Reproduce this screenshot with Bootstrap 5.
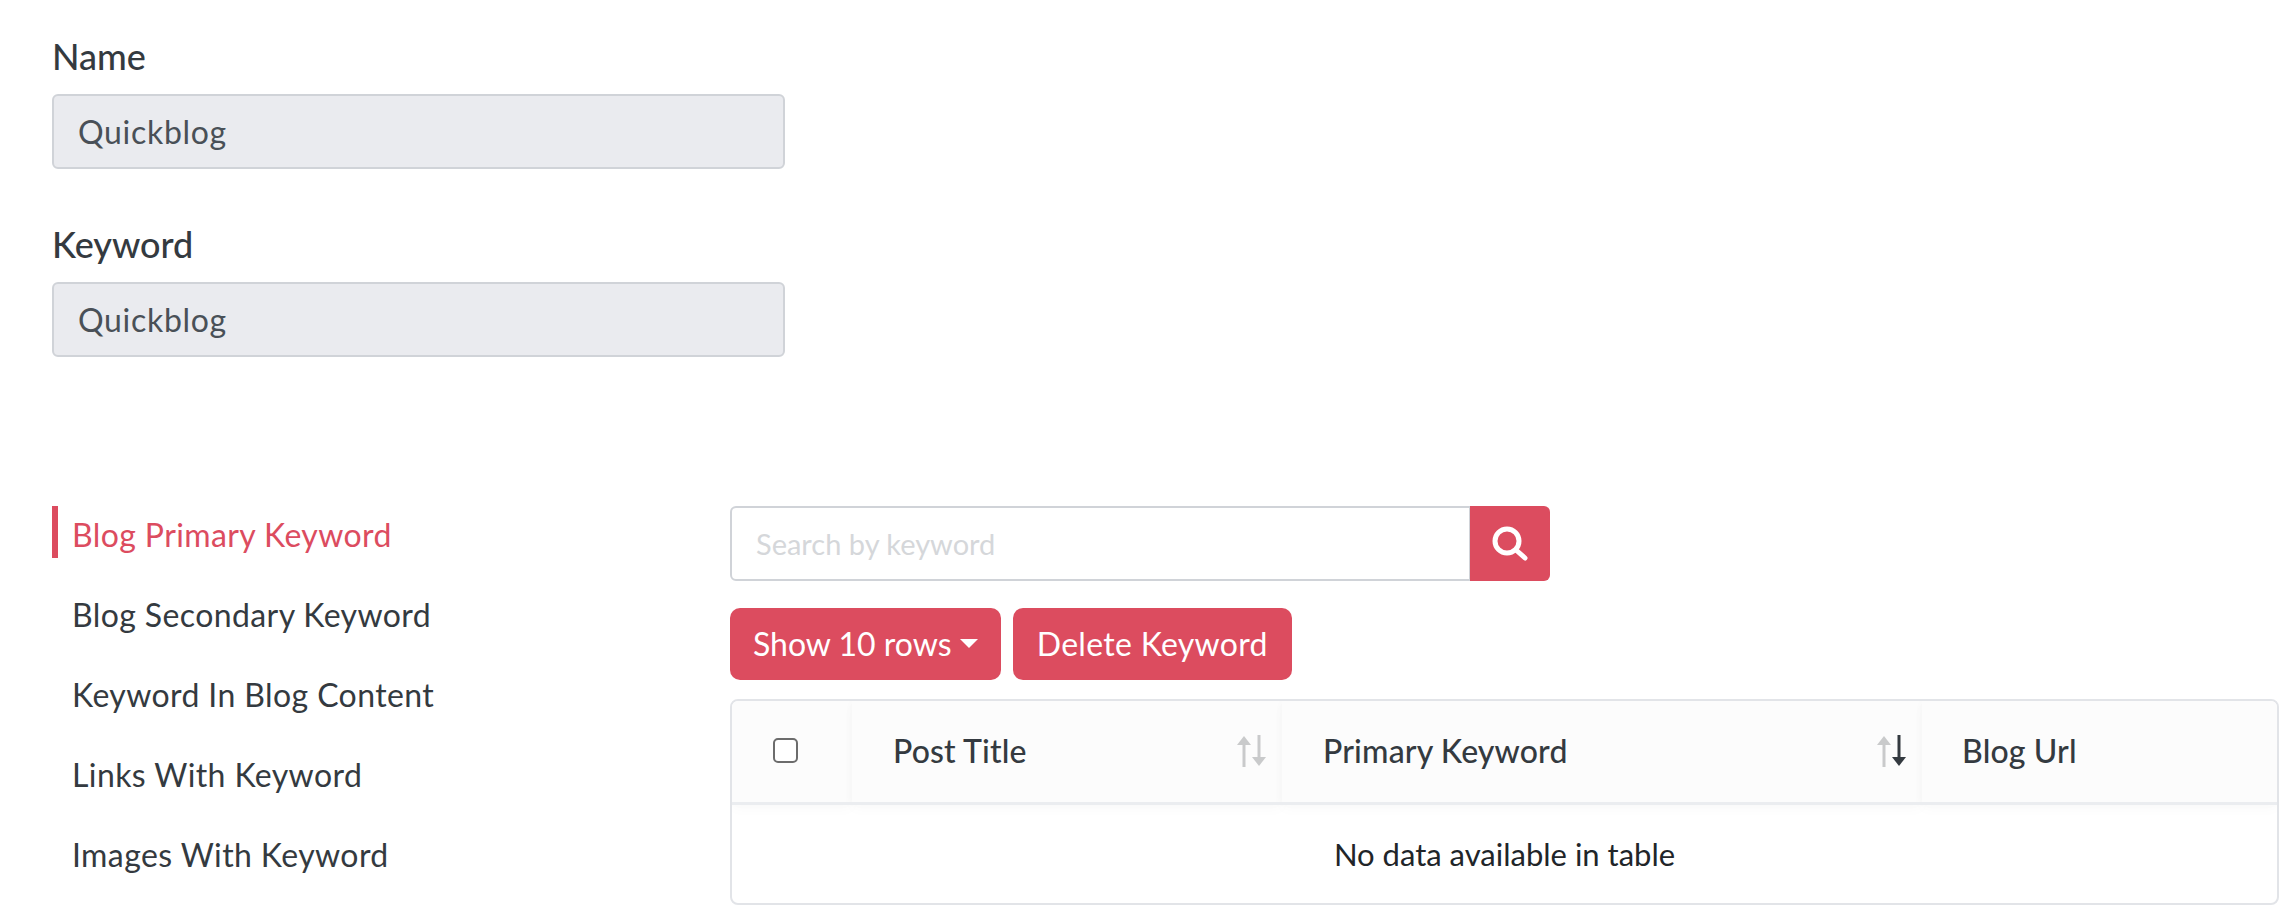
<!DOCTYPE html>
<html lang="en">
<head>
<meta charset="utf-8">
<title>Keyword</title>
<link rel="stylesheet" href="https://cdn.jsdelivr.net/npm/bootstrap@5.3.0/dist/css/bootstrap.min.css">
<style>
body{font-family:"Lato","Open Sans",sans-serif;font-size:32px;color:#343a40;background:#fff;margin:0;overflow:hidden}
.pg{padding:34px 15px 0 52px}
.fld{width:733px;margin-bottom:53px}
.fld label{display:block;font-size:36px;line-height:45px;font-weight:500;margin-bottom:15px;color:#343a40}
.fld .form-control{height:75px;font-size:32px;letter-spacing:.7px;padding:0 24px;background:#eaebef;border:2px solid #d0d3d8;border-radius:6px;color:#495057;opacity:1}
.lower{margin-top:149px}
.sidenav{width:678px;flex:none;gap:28px}
.sidenav a{display:flex;align-items:center;height:52px;border-left:6px solid transparent;padding:6px 0 0 14px;color:#343a40;text-decoration:none;font-size:32px;letter-spacing:.4px}
.sidenav a.on{border-left-color:#dc4c5f;color:#dc4c5f}
.srch{width:820px;height:75px;margin-bottom:27px}
.srch .form-control{height:75px;font-size:29px;padding:0 24px;border:2px solid #d0d3d8;border-radius:6px 0 0 6px}
.srch .form-control::placeholder{color:#d5d7da}
.srch .btn{width:80px;padding:0;background:#dc4c5f;border:0;border-radius:0 6px 6px 0}
.act{gap:12px;margin-bottom:19px}
.act .btn{height:72px;font-size:32px;padding:0 24px;background:#dc4c5f;border:0;border-radius:10px;color:#fff;letter-spacing:.3px}
.act .btn.dropdown-toggle{padding:0 23px;letter-spacing:0}
.tblbox{border:2px solid #e2e4e8;border-radius:8px;height:206px;overflow:hidden}
.tblbox .table{table-layout:fixed;margin:0;width:100%}
.tblbox th{height:102px;padding:0 16px 0 41px;vertical-align:middle;background:#fcfcfc;font-size:32px;font-weight:500;color:#343a40;border-bottom:3px solid #ebedf0;box-shadow:0 6px 12px rgba(0,0,0,.025),0 0 10px rgba(0,0,0,.025);letter-spacing:.15px}
.tblbox th.chk{width:120px;padding:0 0 2px 41px}
.tblbox th.lastc{padding-left:40px}
.tblbox td{text-align:center;vertical-align:middle;border:0;padding:0;height:100px;font-size:31px;color:#212529}
.tblbox .form-check-input{display:block;width:25px;height:25px;margin:0;border:2px solid #6c6c6c;border-radius:5px;float:none}
.c2{width:430px}.c3{width:640px}
</style>
</head>
<body>
<div class="pg">
  <form>
    <div class="fld"><label for="n">Name</label><input id="n" class="form-control" value="Quickblog" disabled></div>
    <div class="fld"><label for="k">Keyword</label><input id="k" class="form-control" value="Quickblog" disabled></div>
  </form>
  <div class="lower d-flex">
    <nav class="sidenav d-flex flex-column">
      <a class="on" href="#">Blog Primary Keyword</a>
      <a href="#">Blog Secondary Keyword</a>
      <a href="#">Keyword In Blog Content</a>
      <a href="#">Links With Keyword</a>
      <a href="#">Images With Keyword</a>
    </nav>
    <div class="flex-grow-1">
      <div class="input-group srch">
        <input class="form-control" placeholder="Search by keyword">
        <button class="btn d-flex align-items-center justify-content-center" type="button" aria-label="Search">
          <svg width="40" height="40" viewBox="0 0 40 40" fill="none" stroke="#fff" stroke-width="5" stroke-linecap="round"><circle cx="17" cy="17" r="12"/><path d="M26 26l9 8"/></svg>
        </button>
      </div>
      <div class="act d-flex">
        <button class="btn dropdown-toggle" type="button">Show 10 rows</button>
        <button class="btn" type="button">Delete Keyword</button>
      </div>
      <div class="tblbox">
        <table class="table">
          <thead>
            <tr>
              <th class="chk"><input class="form-check-input" type="checkbox" aria-label="Select all"></th>
              <th class="c2"><div class="d-flex justify-content-between align-items-center">Post Title
                <svg width="29" height="32" viewBox="0 0 29 32"><path d="M7 32V8" stroke="#c9cacb" stroke-width="3"/><path d="M0 10L7 1l7 9z" fill="#c9cacb"/><path d="M22 0v24" stroke="#c9cacb" stroke-width="3"/><path d="M15 22l7 9 7-9z" fill="#c9cacb"/></svg></div></th>
              <th class="c3"><div class="d-flex justify-content-between align-items-center">Primary Keyword
                <svg width="29" height="32" viewBox="0 0 29 32"><path d="M7 32V8" stroke="#c9cacb" stroke-width="3"/><path d="M0 10L7 1l7 9z" fill="#c9cacb"/><path d="M22 0v24" stroke="#343a40" stroke-width="3"/><path d="M15 22l7 9 7-9z" fill="#343a40"/></svg></div></th>
              <th class="lastc">Blog Url</th>
            </tr>
          </thead>
          <tbody><tr><td colspan="4">No data available in table</td></tr></tbody>
        </table>
      </div>
    </div>
  </div>
</div>
</body>
</html>
